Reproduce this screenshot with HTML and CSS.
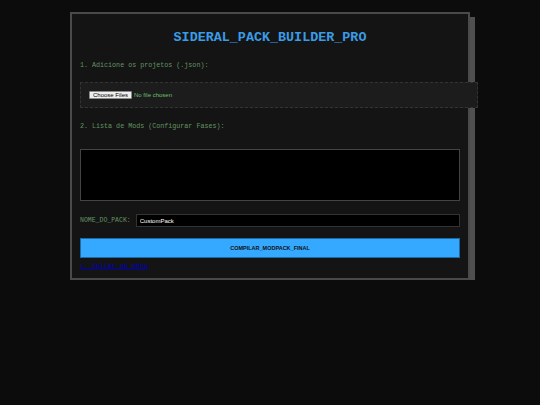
FILE: index.html
```html
<!DOCTYPE html>
<html lang="pt">
<head>
  <meta charset="UTF-8" />
  <meta name="viewport" content="width=device-width, initial-scale=1.0"/>
  <title>Sideral Pack Builder Pro</title>
  <link rel="stylesheet" href="styles.css">
</head>
<body>
  <div class="builder">
    <h1 class="title">SIDERAL_PACK_BUILDER_PRO</h1>

    <p class="step">1. Adicione os projetos (.json):</p>
    <div class="drop-zone">
      <input type="file" id="projectFiles" accept=".json" multiple />
    </div>

    <p class="step step-list">2. Lista de Mods (Configurar Fases):</p>
    <div class="mod-list" id="modList"></div>

    <div class="pack-name">
      <label for="packName">NOME_DO_PACK:</label>
      <input type="text" id="packName" value="CustomPack" spellcheck="false" />
    </div>

    <button class="compile-btn" id="compileBtn">COMPILAR_MODPACK_FINAL</button>

    <a class="back-link" href="#">&lt;- Voltar ao menu</a>
  </div>
</body>
</html>
```

FILE: styles.css
```css
* {
  box-sizing: border-box;
  margin: 0;
  padding: 0;
}
body {
  background-color: #0c0c0c;
  padding-top: 12px;
  font-family: "Liberation Mono", "Courier New", monospace;
}
.builder {
  width: 400px;
  margin: 0 auto;
  background-color: #141414;
  border: 2px solid #4a4a4a;
  box-shadow: 5px 5px 0 #505050;
  padding: 8px 8px 8px;
  display: flex;
  flex-direction: column;
}
.title {
  margin-top: 8px;
  font-size: 13.4px;
  line-height: 16px;
  font-weight: bold;
  color: #3a9ce6;
  text-align: center;
}
.step {
  margin-top: 14px;
  font-size: 6.7px;
  line-height: 10px;
  color: #629462;
}
.step-list {
  margin-top: 13px;
}
.drop-zone {
  width: 100%;
  box-sizing: content-box;
  margin-top: 12px;
  padding: 8px;
  background-color: #1c1c1c;
  border: 1px dashed #333;
}
.drop-zone input {
  display: block;
  height: 8px;
  font-family: "Liberation Sans", Arial, sans-serif;
  font-size: 6px;
  line-height: 8px;
  color: #6fbf6f;
}
.drop-zone input::file-selector-button {
  height: 8px;
  padding: 0 3px;
  margin-right: 2px;
  font-family: "Liberation Sans", Arial, sans-serif;
  font-size: 6px;
  line-height: 6px;
  color: #000;
  background-color: #efefef;
  border: 1px solid #8a8a8a;
  border-radius: 1px;
}
.mod-list {
  margin-top: 18px;
  height: 52px;
  background-color: #000;
  border: 1px solid #444;
}
.pack-name {
  margin-top: 13px;
  display: flex;
  align-items: center;
  gap: 5px;
}
.pack-name label {
  font-size: 6.5px;
  color: #629462;
}
.pack-name input {
  flex: 1;
  height: 13px;
  padding: 0 3px;
  background-color: #000;
  border: 1px solid #333;
  color: #fff;
  font-family: "Liberation Sans", Arial, sans-serif;
  font-size: 6px;
  outline: none;
}
.compile-btn {
  margin-top: 11px;
  height: 20px;
  width: 100%;
  background-color: #35a9ff;
  border: 1px solid #1e6aa5;
  color: #111;
  font-family: "Liberation Sans", Arial, sans-serif;
  font-size: 5.5px;
  font-weight: bold;
  cursor: pointer;
}
.back-link {
  margin-top: 4px;
  font-size: 6.7px;
  line-height: 8px;
  color: #0000bb;
  text-decoration: underline;
}
```
